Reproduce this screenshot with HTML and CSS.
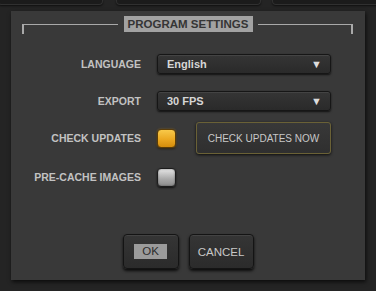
FILE: index.html
```html
<!DOCTYPE html>
<html lang="en">
<head>
<meta charset="UTF-8">
<title>Program Settings</title>
<link rel="stylesheet" href="styles.css">
</head>
<body>

<div class="tabs">
    <div class="tab tab-left"></div>
    <div class="tab tab-mid"></div>
    <div class="tab tab-right"></div>
</div>

<div class="dialog">
    <div class="dialog-header">
        <div class="bracket bracket-left"></div>
        <div class="dialog-title">PROGRAM SETTINGS</div>
        <div class="bracket bracket-right"></div>
    </div>

    <div class="row row-language">
        <label class="row-label">LANGUAGE</label>
        <div class="select">
            <span>English</span>
            <span class="arrow">&#9660;</span>
        </div>
    </div>

    <div class="row row-export">
        <label class="row-label">EXPORT</label>
        <div class="select">
            <span>30 FPS</span>
            <span class="arrow">&#9660;</span>
        </div>
    </div>

    <div class="row row-updates">
        <label class="row-label">CHECK UPDATES</label>
        <div class="checkbox checked"></div>
        <button class="btn btn-outline">CHECK UPDATES NOW</button>
    </div>

    <div class="row row-cache">
        <label class="row-label">PRE-CACHE IMAGES</label>
        <div class="checkbox"></div>
    </div>

    <div class="dialog-footer">
        <button class="btn btn-ok"><span class="focus">OK</span></button>
        <button class="btn btn-cancel">CANCEL</button>
    </div>
</div>

</body>
</html>
```

FILE: styles.css
```css
/* Global Styles */
html, body {
    margin: 0;
    padding: 0;
}

body {
    width: 376px;
    height: 291px;
    overflow: hidden;
    background-color: #242424;
    font-family: "Liberation Sans", Arial, sans-serif;
}

/* Tabs peeking in at the top */
.tabs {
    display: flex;
    height: 5px;
}

.tab {
    height: 4px;
    background-color: #1b1b1b;
    border: 1px solid #303030;
    border-top: none;
    border-radius: 0 0 4px 4px;
    box-shadow: 0 1px 2px rgba(0, 0, 0, 0.6);
}

.tab-left {
    width: 103px;
    margin-left: -2px;
}

.tab-mid {
    width: 143px;
    margin-left: 13px;
}

.tab-right {
    flex: 1;
    margin-left: 11px;
    margin-right: -4px;
}

/* Dialog */
.dialog {
    width: 354px;
    height: 269px;
    margin: 6px 0 0 11px;
    background-color: #393939;
    box-shadow: 1px 2px 4px rgba(0, 0, 0, 0.7);
    display: flex;
    flex-direction: column;
    box-sizing: border-box;
}

.dialog-header {
    display: flex;
    align-items: flex-start;
    padding: 5px 12px 0 11px;
}

.bracket {
    flex: 1;
    height: 9px;
    margin-top: 8px;
    border-top: 1px solid #a9a9a9;
}

.bracket-left {
    border-left: 2px solid #a9a9a9;
    margin-right: 6px;
}

.bracket-right {
    border-right: 2px solid #a9a9a9;
    margin-left: 5px;
}

.dialog-title {
    width: 129px;
    height: 16px;
    line-height: 16px;
    text-align: center;
    background-color: #a2a2a2;
    color: #353535;
    font-size: 11.5px;
    font-weight: bold;
}

.row {
    display: flex;
    align-items: center;
}

.row-label {
    width: 130px;
    text-align: right;
    margin-right: 16px;
    color: #c2c2c2;
    font-size: 10.5px;
    font-weight: bold;
}

.row-language {
    margin-top: 20px;
    height: 20px;
}

.row-export {
    margin-top: 17px;
    height: 20px;
}

.row-updates {
    margin-top: 11px;
    height: 32px;
}

.row-cache {
    margin-top: 13px;
    height: 20px;
}

/* Select boxes */
.select {
    width: 174px;
    height: 20px;
    box-sizing: border-box;
    display: flex;
    align-items: center;
    justify-content: space-between;
    padding: 0 8px 0 9px;
    background: linear-gradient(#353535, #2a2a2a);
    border: 1px solid #161616;
    border-radius: 3px;
    box-shadow: inset 0 1px 0 rgba(255, 255, 255, 0.08), 0 1px 2px rgba(0, 0, 0, 0.7);
    color: #d6d6d6;
    font-size: 11px;
    font-weight: bold;
}

.select .arrow {
    font-size: 11px;
    color: #dcdcdc;
}

/* Checkboxes */
.checkbox {
    width: 19px;
    height: 19px;
    box-sizing: border-box;
    border: 1px solid #1c1c1c;
    border-radius: 4px;
    background: linear-gradient(#e6e6e6, #a8a8a8 60%, #8c8c8c);
    box-shadow: inset 0 0 2px rgba(0, 0, 0, 0.5), 0 1px 2px rgba(0, 0, 0, 0.7);
}

.checkbox.checked {
    background: linear-gradient(#f8c94a, #eba821 55%, #d48d0c);
    border-color: #5a3c08;
    box-shadow: 0 0 2px rgba(230, 160, 30, 0.5), 0 1px 2px rgba(0, 0, 0, 0.7);
}

/* Buttons */
.btn {
    font-family: "Liberation Sans", Arial, sans-serif;
    color: #c8c8c8;
    cursor: pointer;
    padding: 0;
}

.btn-outline {
    width: 135px;
    height: 32px;
    margin-left: 20px;
    background: linear-gradient(#383838, #2f2f2f);
    border: 1px solid #6a6136;
    border-radius: 3px;
    box-shadow: 0 1px 3px rgba(0, 0, 0, 0.8);
    font-size: 10px;
}

.dialog-footer {
    display: flex;
    justify-content: center;
    gap: 10px;
    margin-top: 47px;
}

.btn-ok,
.btn-cancel {
    height: 35px;
    background: linear-gradient(#353535, #2b2b2b);
    border: 1px solid #141414;
    border-radius: 4px;
    box-shadow: inset 0 1px 0 rgba(255, 255, 255, 0.07), 0 2px 3px rgba(0, 0, 0, 0.8);
    font-size: 11.5px;
}

.btn-ok {
    width: 56px;
}

.btn-cancel {
    width: 65px;
}

.btn-ok .focus {
    display: inline-block;
    width: 33px;
    height: 15px;
    line-height: 15px;
    background-color: #9b9b9b;
    color: #2c2c2c;
}
```
